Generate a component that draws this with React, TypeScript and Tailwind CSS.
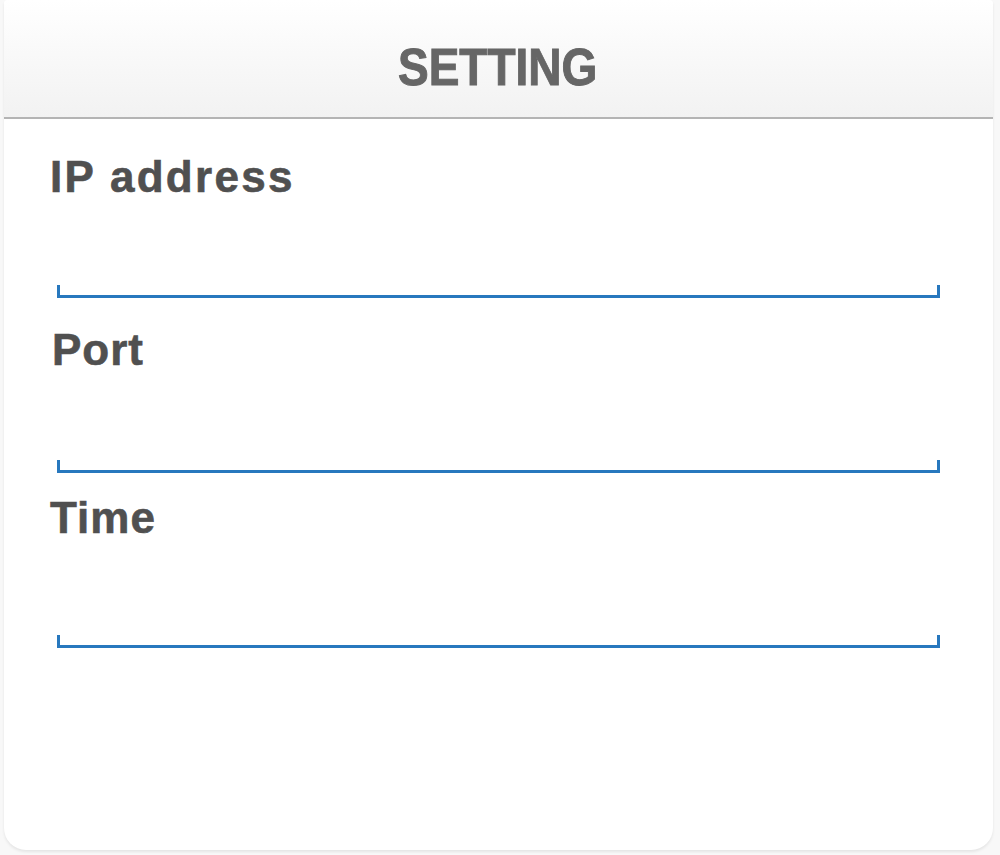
import React from "react";

const fields = [
  { label: "IP address", labelTop: "mt-[36px]", labelIndent: "tracking-[2.3px]", gap: "mt-[86px]" },
  { label: "Port", labelTop: "mt-[30px]", labelIndent: "ml-[2px] tracking-[1px]", gap: "mt-[88px]" },
  { label: "Time", labelTop: "mt-[23px]", labelIndent: "tracking-[1px]", gap: "mt-[95px]" },
];

const Field: React.FC<{ label: string; labelTop: string; labelIndent: string; gap: string }> = ({
  label,
  labelTop,
  labelIndent,
  gap,
}) => {
  return (
    <div className="flex flex-col">
      <label
        className={`${labelTop} ${labelIndent} text-[44px] leading-[44px] font-bold text-[#505050] [-webkit-text-stroke:0.6px_#505050]`}
      >
        {label}
      </label>
      {/* underline input with small end ticks */}
      <div
        className={`${gap} ml-[7px] w-[883px] h-[13px] border-l-[3px] border-r-[3px] border-b-[3px] border-[#2878be]`}
      />
    </div>
  );
};

export default function App() {
  return (
    <div
      className="w-[1000px] h-[855px] bg-[#f8f8f8] pl-[4px]"
      style={{ fontFamily: '"Liberation Sans", Arial, sans-serif' }}
    >
      <div className="w-[989px] h-[850px] bg-white rounded-b-[22px] rounded-t-[4px] shadow-[0_2px_3px_rgba(0,0,0,0.08)] flex flex-col">
        <div className="h-[119px] rounded-t-[4px] bg-gradient-to-b from-white to-[#f2f2f2] border-b-2 border-[#b4b4b4] flex justify-center pt-[41px]">
          <h1 className="text-[52px] leading-[52px] font-bold text-[#666666] scale-x-[0.885] ml-[-1px] [-webkit-text-stroke:1px_#666666]">
            SETTING
          </h1>
        </div>
        <div className="flex flex-col pl-[46px]">
          {fields.map((f) => (
            <Field key={f.label} {...f} />
          ))}
        </div>
      </div>
    </div>
  );
}
